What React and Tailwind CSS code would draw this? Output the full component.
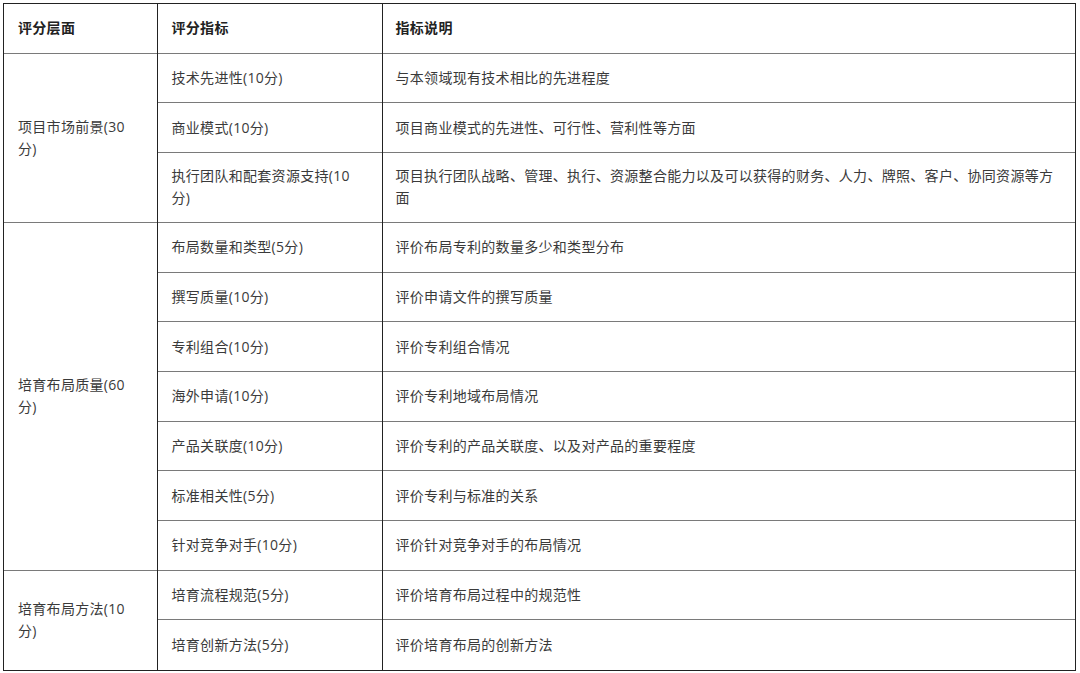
import React from "react";

const groups = [
  {
    name: "项目市场前景(30分)",
    items: [
      ["技术先进性(10分)", "与本领域现有技术相比的先进程度"],
      ["商业模式(10分)", "项目商业模式的先进性、可行性、营利性等方面"],
      [
        "执行团队和配套资源支持(10分)",
        "项目执行团队战略、管理、执行、资源整合能力以及可以获得的财务、人力、牌照、客户、协同资源等方面",
        "tall",
      ],
    ],
  },
  {
    name: "培育布局质量(60分)",
    items: [
      ["布局数量和类型(5分)", "评价布局专利的数量多少和类型分布"],
      ["撰写质量(10分)", "评价申请文件的撰写质量"],
      ["专利组合(10分)", "评价专利组合情况"],
      ["海外申请(10分)", "评价专利地域布局情况"],
      ["产品关联度(10分)", "评价专利的产品关联度、以及对产品的重要程度"],
      ["标准相关性(5分)", "评价专利与标准的关系"],
      ["针对竞争对手(10分)", "评价针对竞争对手的布局情况"],
    ],
  },
  {
    name: "培育布局方法(10分)",
    items: [
      ["培育流程规范(5分)", "评价培育布局过程中的规范性"],
      ["培育创新方法(5分)", "评价培育布局的创新方法"],
    ],
  },
];

export default function App() {
  return (
    <div className="w-[1080px] h-[673px] bg-white pt-[3px] pl-[3px] font-['Open_Sans','Noto_Sans_CJK_SC',sans-serif] text-[14px] leading-[22px] text-[#3a3a3a] tracking-[0.3px]">
      <div className="w-[1073px] border border-[#222]">
        <table className="w-full table-fixed border-collapse">
          <colgroup>
            <col className="w-[153px]" />
            <col className="w-[225px]" />
            <col />
          </colgroup>
          <thead>
            <tr className="h-[49px] font-bold text-[#222]">
              <th className="text-left font-bold pl-[14px]">评分层面</th>
              <th className="text-left font-bold pl-[14px] border-l border-[#222]">评分指标</th>
              <th className="text-left font-bold pl-[13px] border-l border-[#222]">指标说明</th>
            </tr>
          </thead>
          <tbody>
            {groups.map((g) =>
              g.items.map((item, i) => (
                <tr key={item[0]} className={item[2] ? "h-[70px]" : "h-[49.7px]"}>
                  {i === 0 && (
                    <td
                      rowSpan={g.items.length}
                      className="align-middle pl-[14px] pr-[16px] border-t border-[#7a7a7a]"
                    >
                      {g.name}
                    </td>
                  )}
                  <td className="align-middle pl-[14px] pr-[16px] border-t border-t-[#7a7a7a] border-l border-l-[#222]">
                    {item[0]}
                  </td>
                  <td className="align-middle pl-[13px] pr-[17px] border-t border-t-[#7a7a7a] border-l border-l-[#222]">
                    {item[1]}
                  </td>
                </tr>
              ))
            )}
          </tbody>
        </table>
      </div>
    </div>
  );
}
